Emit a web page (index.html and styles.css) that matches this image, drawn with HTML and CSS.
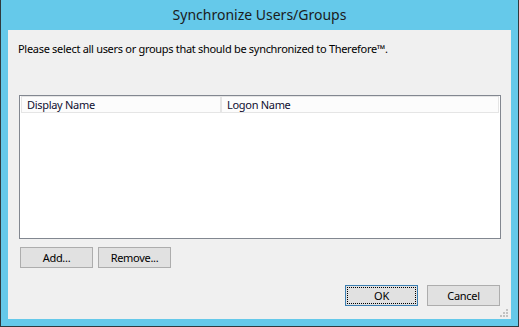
FILE: index.html
```html
<!DOCTYPE html>
<html lang="en">
<head>
  <meta charset="UTF-8">
  <title>Synchronize Users/Groups</title>
  <link rel="stylesheet" href="styles.css">
</head>
<body>
  <div class="window">
    <div class="titlebar">Synchronize Users/Groups</div>
    <div class="client">
      <p class="intro">Please select all users or groups that should be synchronized to Therefore™.</p>
      <div class="listview">
        <div class="list-header">
          <div class="col col-display">Display Name</div>
          <div class="col col-logon">Logon Name</div>
        </div>
      </div>
      <div class="list-buttons">
        <button class="btn">Add...</button>
        <button class="btn">Remove...</button>
      </div>
      <div class="dialog-buttons">
        <button class="btn btn-default">OK</button>
        <button class="btn">Cancel</button>
      </div>
      <svg class="grip" width="8" height="8" viewBox="0 0 8 8">
        <rect x="6" y="0" width="2" height="2" fill="#c2c2c2"/>
        <rect x="3" y="3" width="2" height="2" fill="#c2c2c2"/>
        <rect x="6" y="3" width="2" height="2" fill="#c2c2c2"/>
        <rect x="0" y="6" width="2" height="2" fill="#c2c2c2"/>
        <rect x="3" y="6" width="2" height="2" fill="#c2c2c2"/>
        <rect x="6" y="6" width="2" height="2" fill="#c2c2c2"/>
      </svg>
    </div>
  </div>
</body>
</html>
```

FILE: styles.css
```css
body {
  margin: 0;
  padding: 0;
  font-family: "Noto Sans", "DejaVu Sans", sans-serif;
  font-size: 11px;
  letter-spacing: -0.3px;
  color: #000;
}
.window {
  width: 519px;
  height: 327px;
  box-sizing: border-box;
  background-color: #65c9ea;
  border: 1px solid #2f3a3e;
  border-top: none;
  padding: 0 7px 7px 7px;
}
.titlebar {
  height: 30px;
  line-height: 30px;
  text-align: center;
  font-size: 14px;
  letter-spacing: 0;
  color: #1b1b1b;
}
.client {
  position: relative;
  height: 289px;
  background-color: #f0f0f0;
  padding: 10px 0 0 10px;
  box-sizing: border-box;
}
.intro {
  margin: 0;
  line-height: 17px;
}
.listview {
  width: 482px;
  height: 144px;
  margin: 38px 0 0 1px;
  box-sizing: border-box;
  border: 1px solid #828790;
  background-color: #fff;
  padding-left: 1px;
}
.list-header {
  display: flex;
}
.col {
  height: 17px;
  box-sizing: border-box;
  border: 1px solid #e5e5e5;
  background-color: #fcfcfc;
  line-height: 15px;
  padding-left: 5px;
  color: #0f0f30;
}
.col-display {
  width: 200px;
}
.col-logon {
  width: 278px;
}
.list-buttons {
  display: flex;
  gap: 5px;
  margin: 8px 0 0 2px;
}
.dialog-buttons {
  display: flex;
  gap: 9px;
  justify-content: flex-end;
  margin: 17px 11px 0 0;
}
.btn {
  width: 73px;
  height: 21px;
  box-sizing: border-box;
  border: 1px solid #adadad;
  background-color: #e1e1e1;
  font-family: inherit;
  font-size: 11px;
  letter-spacing: -0.3px;
  color: #000;
  padding: 0;
  margin: 0;
}
.btn-default {
  border-color: #3c7fb1;
  outline: 1px dotted #000;
  outline-offset: -3px;
}
.grip {
  position: absolute;
  right: 3px;
  bottom: 2px;
}
```
